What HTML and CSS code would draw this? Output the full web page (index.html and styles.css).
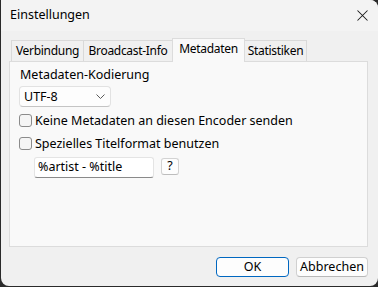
FILE: index.html
```html
<!DOCTYPE html>
<html lang="de">
<head>
<meta charset="utf-8">
<title>Einstellungen</title>
<link rel="stylesheet" href="styles.css">
</head>
<body>
<div class="window">
  <div class="titlebar">
    <span class="title">Einstellungen</span>
    <span class="close">
      <svg width="11" height="11" viewBox="0 0 11 11"><path d="M0.5 0.5 L10.5 10.5 M10.5 0.5 L0.5 10.5" stroke="#1a1a1a" stroke-width="1.05" fill="none"/></svg>
    </span>
  </div>
  <div class="content">
    <div class="tabs">
      <div class="tab t1">Verbindung</div>
      <div class="tab t2">Broadcast-Info</div>
      <div class="tab t3 active">Metadaten</div>
      <div class="tab t4">Statistiken</div>
    </div>
    <div class="panel">
      <div class="label">Metadaten-Kodierung</div>
      <div class="combo">
        <span>UTF-8</span>
        <svg class="chev" width="9" height="5" viewBox="0 0 9 5"><path d="M0.5 0.5 L4.5 4.5 L8.5 0.5" stroke="#5a5a5a" stroke-width="1" fill="none"/></svg>
      </div>
      <div class="check r1"><span class="box"></span><span class="ctext">Keine Metadaten an diesen Encoder senden</span></div>
      <div class="check r2"><span class="box"></span><span class="ctext">Spezielles Titelformat benutzen</span></div>
      <div class="fmt">
        <div class="input">%artist - %title</div>
        <div class="qbtn">?</div>
      </div>
    </div>
    <div class="buttons">
      <div class="btn ok">OK</div>
      <div class="btn">Abbrechen</div>
    </div>
  </div>
</div>
</body>
</html>
```

FILE: styles.css
```css
html, body {
  margin: 0;
  padding: 0;
  background: #2a2a2a;
  width: 378px;
  height: 287px;
  overflow: hidden;
}
body {
  font-family: "Noto Sans", "Open Sans", sans-serif;
  font-size: 12.5px;
  color: #000;
}
.window {
  margin-left: 1px;
  width: 377px;
  height: 286px;
  border-radius: 0 8px 8px 8px;
  background: #f0f0f0;
  overflow: hidden;
  display: flex;
  flex-direction: column;
}
.titlebar {
  height: 31px;
  background: #f3f3f3;
  display: flex;
  align-items: center;
  padding-left: 9px;
  box-sizing: border-box;
}
.title {
  line-height: 16px;
  margin-top: -1px;
}
.close {
  margin-left: auto;
  margin-right: 10px;
  width: 11px;
  height: 11px;
  display: flex;
  margin-top: -1px;
}
.content {
  flex: 1;
  padding: 7px 10px 0 8px;
  display: flex;
  flex-direction: column;
}
.tabs {
  display: flex;
  align-items: flex-end;
  height: 23px;
  padding-left: 2px;
  position: relative;
  z-index: 1;
  font-size: 12px;
  letter-spacing: -0.3px;
}
.tab {
  box-sizing: border-box;
  height: 21px;
  border: 1px solid #d9d9d9;
  border-bottom: none;
  background: #f0f0f0;
  text-align: center;
  line-height: 20px;
  margin-left: -1px;
  white-space: nowrap;
}
.t1 { width: 73px; margin-left: 0; }
.t2 { width: 90px; }
.t3 { width: 73px; }
.t4 { width: 63px; }
.tab.active {
  height: 24px;
  background: #f9f9f9;
  line-height: 19px;
  margin-bottom: -1px;
  border-color: #dcdcdc;
  position: relative;
}
.panel {
  box-sizing: border-box;
  width: 359px;
  height: 186px;
  border: 1px solid #dcdcdc;
  background: #f9f9f9;
  padding: 5px 0 0 9px;
  display: flex;
  flex-direction: column;
  align-items: flex-start;
}
.label {
  line-height: 16px;
  padding-left: 1px;
}
.combo {
  box-sizing: border-box;
  margin-top: 3px;
  width: 92px;
  height: 21px;
  border: 1px solid #e2e2e2;
  border-bottom-color: #c4c4c4;
  border-radius: 4px;
  background: #fdfdfd;
  display: flex;
  align-items: center;
  padding-left: 4px;
  padding-right: 5px;
  line-height: 16px;
}
.chev {
  margin-left: auto;
}
.check {
  display: flex;
  align-items: center;
  height: 13px;
}
.r1 { margin-top: 7px; }
.r2 { margin-top: 10px; }
.box {
  box-sizing: border-box;
  width: 13px;
  height: 13px;
  border: 1px solid #8b8b8b;
  border-radius: 3px;
  background: #f5f5f5;
  flex: none;
}
.ctext {
  margin-left: 3px;
  line-height: 16px;
  white-space: nowrap;
}
.fmt {
  display: flex;
  align-items: flex-start;
  margin-top: 7px;
  margin-left: 15px;
}
.input {
  box-sizing: border-box;
  width: 120px;
  height: 21px;
  border: 1px solid #e4e4e4;
  border-bottom-color: #8a8a8a;
  border-radius: 3px;
  background: #fff;
  padding-left: 3px;
  line-height: 18px;
  white-space: nowrap;
}
.qbtn {
  box-sizing: border-box;
  margin-left: 7px;
  margin-top: 1px;
  width: 18px;
  height: 17px;
  border: 1px solid #d3d3d3;
  border-bottom-color: #bdbdbd;
  border-radius: 3px;
  background: #fdfdfd;
  text-align: center;
  line-height: 14px;
}
.buttons {
  display: flex;
  justify-content: flex-end;
  gap: 7px;
  margin-top: 10px;
}
.btn {
  box-sizing: border-box;
  width: 72px;
  height: 20px;
  border: 1px solid #d0d0d0;
  border-bottom-color: #b8b8b8;
  border-radius: 4px;
  background: #fdfdfd;
  text-align: center;
  line-height: 17px;
}
.btn.ok {
  width: 73px;
  border: 1px solid #0067c0;
}
```
